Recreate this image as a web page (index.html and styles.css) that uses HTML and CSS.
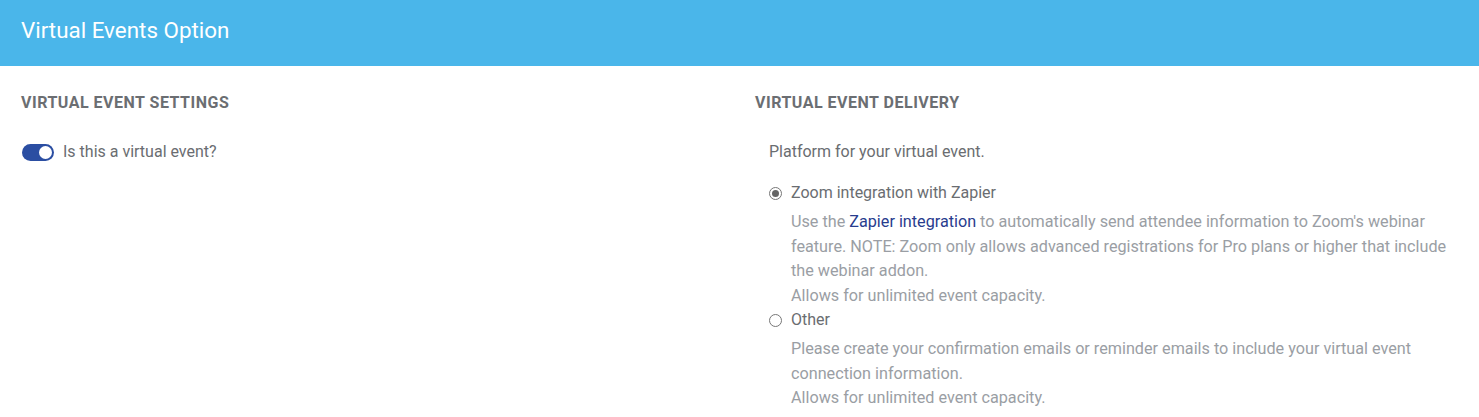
FILE: index.html
```html
<!DOCTYPE html>
<html>
<head>
<meta charset="utf-8">
<link rel="stylesheet" href="styles.css">
</head>
<body>
<header class="topbar">
  <h1 class="title">Virtual Events Option</h1>
</header>
<main class="content">
  <section class="col">
    <h2 class="heading">VIRTUAL EVENT SETTINGS</h2>
    <label class="toggle-row">
      <span class="switch"><span class="knob"></span></span>
      <span class="toggle-label">Is this a virtual event?</span>
    </label>
  </section>
  <section class="col right">
    <h2 class="heading">VIRTUAL EVENT DELIVERY</h2>
    <div class="platform">
      <p class="platform-title">Platform for your virtual event.</p>
      <div class="option first">
        <span class="radio checked"></span>
        <span class="option-label">Zoom integration with Zapier</span>
      </div>
      <div class="desc">
        <p>Use the <a class="link" href="#">Zapier integration</a> to automatically send attendee information to Zoom's webinar feature. NOTE: Zoom only allows advanced registrations for Pro plans or higher that include the webinar addon.</p>
        <p>Allows for unlimited event capacity.</p>
      </div>
      <div class="option">
        <span class="radio"></span>
        <span class="option-label">Other</span>
      </div>
      <div class="desc">
        <p>Please create your confirmation emails or reminder emails to include your virtual event connection information.</p>
        <p>Allows for unlimited event capacity.</p>
      </div>
    </div>
  </section>
</main>
</body>
</html>
```

FILE: styles.css
```css
* { box-sizing: border-box; }
html, body { margin: 0; padding: 0; background: #fff; }
body { font-family: Roboto, "Liberation Sans", Arial, sans-serif; color: #6a6d71; }

.topbar {
  height: 66px;
  background: #4ab6ea;
  display: flex;
  align-items: center;
  padding: 0 21px;
}
.title {
  margin: 0;
  font-size: 22.4px;
  font-weight: 400;
  color: #fff;
  position: relative;
  top: -3px;
}

.content {
  display: grid;
  grid-template-columns: 1fr 1fr;
  column-gap: 31px;
  padding: 0 21px;
}

.heading {
  margin: 28px 0 0;
  font-size: 16px;
  font-weight: 700;
  color: #6b6e72;
  letter-spacing: 0.5px;
  line-height: 18px;
}

.toggle-row {
  display: flex;
  align-items: center;
  margin-top: 31px;
  gap: 9px;
}
.switch {
  width: 32px;
  height: 17px;
  border-radius: 9px;
  background: #2b4ea2;
  display: flex;
  align-items: center;
  justify-content: flex-end;
  padding-right: 2px;
  margin-left: 1px;
}
.knob {
  width: 13px;
  height: 13px;
  border-radius: 50%;
  background: #fff;
}
.toggle-label {
  font-size: 16px;
  line-height: 18px;
  color: #6a6d71;
}

.platform { padding-left: 14px; }
.platform-title {
  margin: 31px 0 0;
  font-size: 16px;
  line-height: 18px;
  color: #6a6d71;
}
.option {
  display: flex;
  align-items: center;
  gap: 9px;
  font-size: 16px;
  line-height: 18px;
  color: #6a6d71;
}
.option.first { margin-top: 23px; }
.radio {
  width: 13px;
  height: 13px;
  border: 1px solid #777;
  border-radius: 50%;
  display: flex;
  align-items: center;
  justify-content: center;
  flex: none;
}
.radio.checked::after {
  content: "";
  width: 7px;
  height: 7px;
  border-radius: 50%;
  background: #666;
}
.desc {
  padding-left: 22px;
  font-size: 16.2px;
  line-height: 24.5px;
  color: #9a9ea4;
  margin: 8px 0 3px;
}
.desc p { margin: 0; }
.link { color: #283c8e; text-decoration: none; }
```
